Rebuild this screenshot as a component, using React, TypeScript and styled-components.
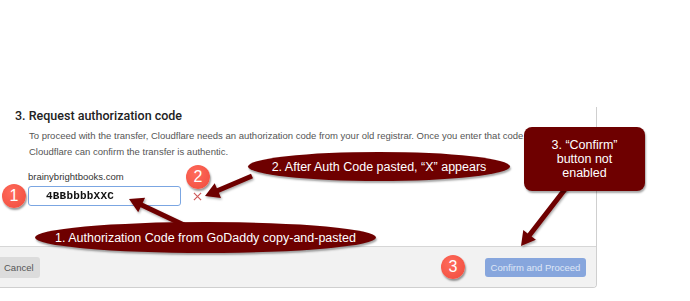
import styled, { createGlobalStyle } from "styled-components"

const GlobalStyle = createGlobalStyle`
  html, body {
    margin: 0;
    padding: 0;
    background: #ffffff;
  }
  body {
    font-family: "Liberation Sans", Arial, sans-serif;
    color: #333;
  }
`

// polygon for an arrow (shaft + head) from start to tip
function arrowPoints(x1: number, y1: number, x2: number, y2: number, w = 5, hl = 14, hw = 16) {
  const dx = x2 - x1
  const dy = y2 - y1
  const len = Math.hypot(dx, dy)
  const ux = dx / len
  const uy = dy / len
  const px = -uy
  const py = ux
  const bx = x2 - ux * hl
  const by = y2 - uy * hl
  const pts = [
    [x1 + (px * w) / 2, y1 + (py * w) / 2],
    [bx + (px * w) / 2, by + (py * w) / 2],
    [bx + (px * hw) / 2, by + (py * hw) / 2],
    [x2, y2],
    [bx - (px * hw) / 2, by - (py * hw) / 2],
    [bx - (px * w) / 2, by - (py * w) / 2],
    [x1 - (px * w) / 2, y1 - (py * w) / 2],
  ]
  return pts.map((p) => p.map((n) => n.toFixed(1)).join(",")).join(" ")
}

const arrows = [
  { from: [252, 176], to: [205, 196] },
  { from: [186, 226], to: [129, 199] },
  { from: [566, 188], to: [521, 246] },
]

export default function App() {
  return (
    <>
      <GlobalStyle />
      <Page>
        <Panel>
          <Body>
            <Heading>3. Request authorization code</Heading>
            <Description>
              To proceed with the transfer, Cloudflare needs an authorization code from your old registrar. Once you enter that code,
              Cloudflare can confirm the transfer is authentic.
            </Description>
            <Field>
              <Label>brainybrightbooks.com</Label>
              <InputRow>
                <CodeInput>
                  <Masked>4BBbbbbXXC</Masked>
                </CodeInput>
                <ClearIcon viewBox="0 0 10 10">
                  <path d="M1 1 L9 9 M9 1 L1 9" />
                </ClearIcon>
              </InputRow>
            </Field>
          </Body>
          <Footer>
            <CancelBT type="button">Cancel</CancelBT>
            <ConfirmBT type="button" disabled>Confirm and Proceed</ConfirmBT>
          </Footer>
        </Panel>

        <Overlay>
          <ArrowLayer width="690" height="301" viewBox="0 0 690 301">
            <defs>
              <filter id="arrowShadow" x="-20%" y="-20%" width="140%" height="140%">
                <feDropShadow dx="1" dy="1.5" stdDeviation="1" floodColor="#000" floodOpacity="0.35" />
              </filter>
            </defs>
            {arrows.map((a, i) => (
              <polygon
                key={i}
                points={arrowPoints(a.from[0], a.from[1], a.to[0], a.to[1])}
                fill="#6e0000"
                filter="url(#arrowShadow)"
              />
            ))}
          </ArrowLayer>

          <Pill $left={248} $top={152} $width={262} $height={29}>
            2. After Auth Code pasted, “X” appears
          </Pill>
          <Pill $left={35} $top={222} $width={341} $height={31}>
            1. Authorization Code from GoDaddy copy-and-pasted
          </Pill>
          <NoteBox>
            3. “Confirm”
            <br />
            button not
            <br />
            enabled
          </NoteBox>

          <Badge $x={14} $y={196}>1</Badge>
          <Badge $x={198} $y={177}>2</Badge>
          <Badge $x={453} $y={267}>3</Badge>
        </Overlay>
      </Page>
    </>
  )
}

//style

interface PillProps {
  $left: number
  $top: number
  $width: number
  $height: number
}

interface BadgeProps {
  $x: number
  $y: number
}

const Page = styled.div`
  position: relative;
  width: 690px;
  height: 301px;
  padding-top: 107px;
  box-sizing: border-box;
  overflow: hidden;
`

const Panel = styled.div`
  width: 604px;
  margin-left: -7px;
  border-right: 1px solid #cfcfcf;
  border-bottom: 1px solid #cfcfcf;
  border-bottom-right-radius: 4px;
  box-sizing: border-box;
  overflow: hidden;
`

const Body = styled.div`
  height: 139px;
  padding-left: 22px;
  box-sizing: border-box;
`

const Heading = styled.h3`
  margin: 0;
  font-family: Roboto, "Liberation Sans", sans-serif;
  font-size: 12.5px;
  font-weight: 500;
  line-height: 18px;
  color: #222;
`

const Description = styled.p`
  width: 540px;
  margin: 3px 0 0 14px;
  font-size: 9.5px;
  line-height: 16px;
  color: #555;
`

const Field = styled.div`
  margin: 10px 0 0 13px;
`

const Label = styled.div`
  font-size: 9.5px;
  line-height: 14px;
  color: #333;
`

const InputRow = styled.div`
  display: flex;
  align-items: center;
  gap: 12px;
  margin-top: 2px;
`

const CodeInput = styled.div`
  display: flex;
  align-items: center;
  width: 153px;
  height: 20px;
  padding-left: 17px;
  border: 1px solid #7ba6e2;
  border-radius: 3px;
  box-sizing: border-box;
  background: #fff;
`

const Masked = styled.span`
  font-family: "Liberation Mono", monospace;
  font-size: 11px;
  font-weight: bold;
  letter-spacing: 0.2px;
  color: #111;
  filter: blur(0.35px);
`

const ClearIcon = styled.svg`
  width: 9px;
  height: 9px;
  stroke: #cf5a5a;
  stroke-width: 1.3;
  fill: none;
`

const Footer = styled.div`
  display: flex;
  align-items: center;
  justify-content: space-between;
  height: 40px;
  padding-right: 10px;
  border-top: 1px solid #d6d6d6;
  background: #f2f2f2;
`

const CancelBT = styled.button`
  width: 47px;
  height: 21px;
  padding: 0 0 0 11px;
  border: none;
  border-radius: 3px;
  background: #dcdcdc;
  font-family: "Liberation Sans", sans-serif;
  font-size: 9.5px;
  color: #555;
  text-align: left;
`

const ConfirmBT = styled.button`
  width: 101px;
  height: 19px;
  padding: 0;
  border: none;
  border-radius: 3px;
  background: #87a6dd;
  font-family: "Liberation Sans", sans-serif;
  font-size: 9.5px;
  color: #dfe7f6;
`

const Overlay = styled.div`
  position: absolute;
  inset: 0;
  pointer-events: none;
`

const ArrowLayer = styled.svg`
  position: absolute;
  left: 0;
  top: 0;
`

const Callout = styled.div`
  position: absolute;
  display: flex;
  align-items: center;
  justify-content: center;
  background: #6e0000;
  box-shadow: 1px 2px 2px rgba(0, 0, 0, 0.35);
  font-family: "Liberation Sans", Arial, sans-serif;
  font-size: 12.5px;
  color: #fff;
`

const Pill = styled(Callout)<PillProps>`
  left: ${(p) => p.$left}px;
  top: ${(p) => p.$top}px;
  width: ${(p) => p.$width}px;
  height: ${(p) => p.$height}px;
  border-radius: 50%;
  white-space: nowrap;
`

const NoteBox = styled(Callout)`
  left: 524px;
  top: 127px;
  width: 121px;
  height: 64px;
  border-radius: 8px;
  line-height: 14px;
  text-align: center;
`

const Badge = styled.div<BadgeProps>`
  position: absolute;
  left: ${(p) => p.$x - 12}px;
  top: ${(p) => p.$y - 12}px;
  width: 24px;
  height: 24px;
  display: flex;
  align-items: center;
  justify-content: center;
  border-radius: 50%;
  background: radial-gradient(circle at 40% 35%, #ff6b5c, #ef4b3c);
  box-shadow: 1px 2px 2px rgba(0, 0, 0, 0.4);
  font-family: "Liberation Sans", Arial, sans-serif;
  font-size: 16px;
  color: #fff;
`
